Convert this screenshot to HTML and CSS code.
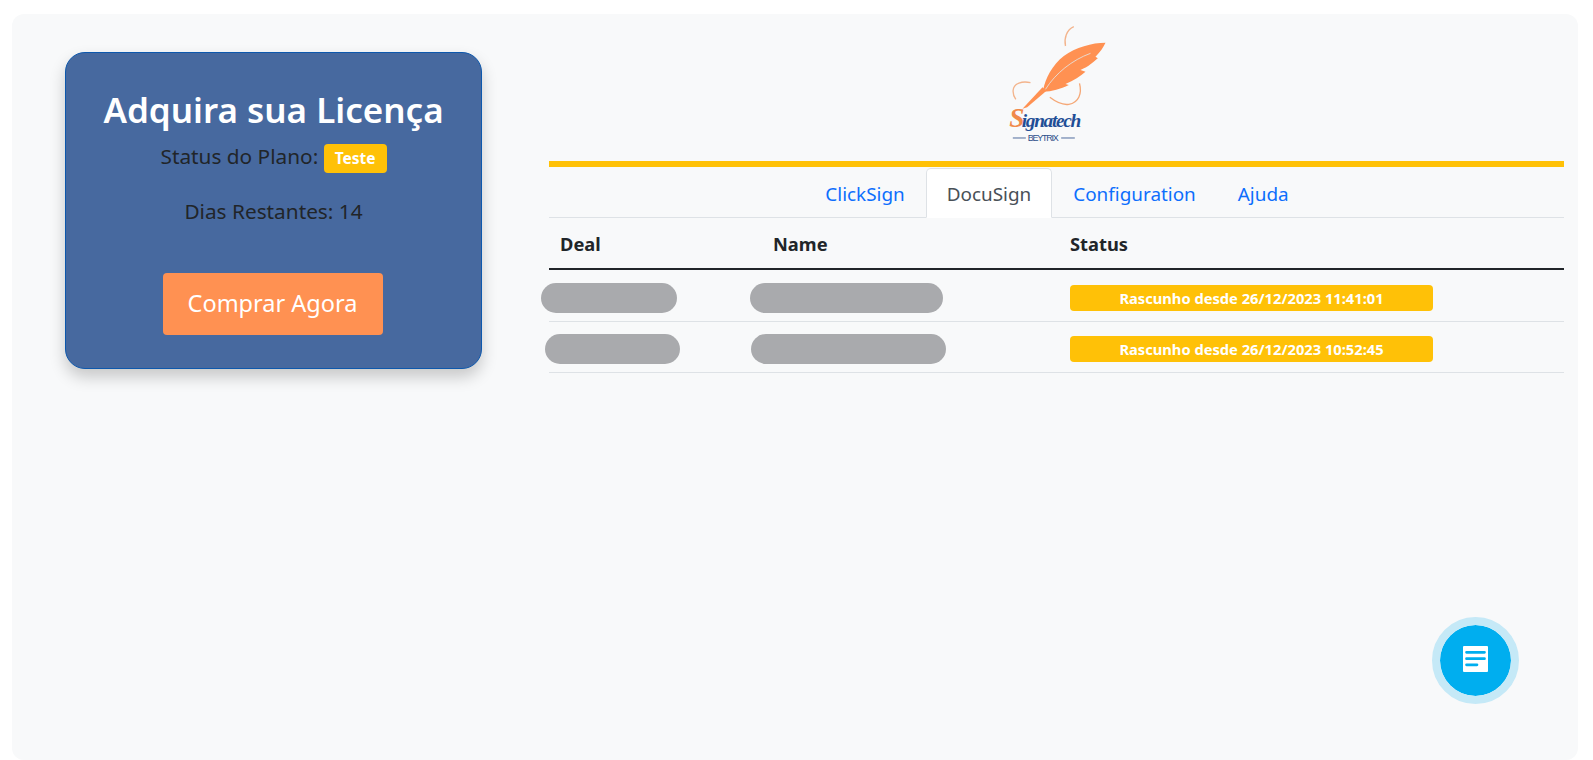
FILE: index.html
```html
<!DOCTYPE html>
<html lang="en">
<head>
  <meta charset="UTF-8" />
  <title>Signatech</title>
  <link rel="stylesheet" href="styles.css">
</head>
<body>
  <div class="panel">
    <div class="license-card">
      <h2>Adquira sua Licença</h2>
      <p class="plan-status">Status do Plano: <span class="plan-badge">Teste</span></p>
      <p class="days-left">Dias Restantes: 14</p>
      <a class="buy-btn" href="#">Comprar Agora</a>
    </div>

    <div class="content">
      <div class="logo">
        <svg width="140" height="140" viewBox="6.5 0 140 140">
          <g transform="scale(0.3333)">
            <path d="M255 108C250 85 258 60 280 50" fill="none" stroke="#f3b48c" stroke-width="4"/>
            <path d="M150 218C125 212 100 220 98 240C97 250 100 260 106 268" fill="none" stroke="#f3b48c" stroke-width="4"/>
            <path d="M297 220C305 250 295 278 265 283C245 286 225 275 208 262" fill="none" stroke="#f5a877" stroke-width="4"/>
            <path d="M188 240C195 205 215 165 250 138C285 112 335 98 375 98C368 112 360 125 345 140L352 145C340 155 325 170 300 180L315 185C300 198 280 212 255 222L265 225C240 237 215 245 188 245Z" fill="#ff9152"/>
            <path d="M126 296L186 232L198 242L140 292Z" fill="#ff9152"/>
            <path d="M195 238C225 190 275 150 330 130" fill="none" stroke="#e9d8cc" stroke-width="3"/>
            <text class="logo-s" x="86" y="352">S</text>
            <text class="logo-name" x="124" y="350" textLength="178">ignatech</text>
            <path d="M97 384H136M242 384H283" stroke="#2c4f8a" stroke-width="2.5"/>
            <text class="logo-sub" x="142" y="392" textLength="93">BEYTRIX</text>
          </g>
        </svg>
      </div>

      <div class="yellow-bar"></div>

      <ul class="tabs">
        <li class="tab">ClickSign</li>
        <li class="tab tab-active">DocuSign</li>
        <li class="tab">Configuration</li>
        <li class="tab">Ajuda</li>
      </ul>

      <table class="deals">
        <thead>
          <tr>
            <th class="col-deal">Deal</th>
            <th class="col-name">Name</th>
            <th>Status</th>
          </tr>
        </thead>
        <tbody>
          <tr>
            <td><div class="hidden-val deal-a"></div></td>
            <td><div class="hidden-val name-a"></div></td>
            <td><div class="status-badge">Rascunho desde 26/12/2023 11:41:01</div></td>
          </tr>
          <tr>
            <td><div class="hidden-val deal-b"></div></td>
            <td><div class="hidden-val name-b"></div></td>
            <td><div class="status-badge">Rascunho desde 26/12/2023 10:52:45</div></td>
          </tr>
        </tbody>
      </table>
    </div>

    <a class="chat-btn" href="#">
      <svg class="chat-icon" width="25" height="26" viewBox="0 0 25 26">
        <rect width="25" height="26" rx="1" fill="#fff"/>
        <path d="M3.500 6.300H21.500M3.500 12.700H21.500M3.500 18.800H14" stroke="#00aeef" stroke-width="2.700" stroke-linecap="round"/>
      </svg>
    </a>
  </div>
</body>
</html>
```

FILE: styles.css
```css
* {
  box-sizing: border-box;
}

body {
  margin: 0;
  background: #fff;
  font-family: "Noto Sans", Arial, sans-serif;
  color: #212529;
}

.panel {
  position: relative;
  display: flex;
  align-items: flex-start;
  margin: 14px 15px 0 12px;
  height: 746px;
  background: #f8f9fa;
  border-radius: 12px;
}

.license-card {
  width: 417px;
  height: 317px;
  margin: 38px 0 0 53px;
  padding: 33px 0 0;
  text-align: center;
  background: #47699f;
  border: 1px solid #0d58ad;
  border-radius: 20px;
  box-shadow: 0 8px 16px rgba(0, 0, 0, 0.2);
}

.license-card h2 {
  margin: 0 0 7px;
  font-size: 35px;
  line-height: 48px;
  font-weight: 600;
  color: #fff;
}

.plan-status {
  margin: 0 0 23px;
  font-size: 20.800px;
  line-height: 30px;
}

.plan-badge {
  display: inline-block;
  padding: 0 11px;
  font-size: 15.500px;
  line-height: 29px;
  font-weight: 700;
  color: #fff;
  background: #ffc107;
  border-radius: 4px;
  vertical-align: top;
  margin-top: 3px;
}

.days-left {
  margin: 0 0 47px;
  font-size: 20.800px;
  line-height: 30px;
}

.buy-btn {
  display: inline-block;
  width: 220px;
  height: 62px;
  margin-left: -2px;
  font-size: 23.500px;
  line-height: 60px;
  color: #fff;
  text-decoration: none;
  background: #ff9152;
  border-radius: 4px;
}

.content {
  width: 1015px;
  margin-left: 67px;
}

.logo {
  display: flex;
  justify-content: center;
  height: 147px;
}

.logo svg {
  margin-top: -4px;
}

.yellow-bar {
  height: 6px;
  background: #ffc107;
}

.tabs {
  display: flex;
  justify-content: center;
  height: 50px;
  margin: 1px 0 0;
  padding: 0 0 0 1px;
  list-style: none;
  border-bottom: 1px solid #dee2e6;
}

.tab {
  padding: 0 20px;
  height: 50px;
  font-size: 18.900px;
  line-height: 50px;
  color: #0d6efd;
  border: 1px solid transparent;
  border-radius: 5px 5px 0 0;
}

.tab-active {
  color: #495057;
  background: #fff;
  border-color: #dee2e6 #dee2e6 #fff;
}

.deals {
  width: 100%;
  border-collapse: collapse;
  table-layout: fixed;
}

.deals th {
  height: 51px;
  padding: 0 11px;
  font-size: 18.300px;
  font-weight: 700;
  text-align: left;
  border-bottom: 2px solid #212529;
}

.col-deal {
  width: 213px;
}

.col-name {
  width: 297px;
}

.deals td {
  height: 51px;
  padding: 12px 11px 0;
  vertical-align: top;
  border-bottom: 1px solid #dee2e6;
}

.deals tbody tr:first-child td {
  height: 52px;
  padding-top: 13px;
}

.hidden-val {
  height: 30px;
  background: #a9aaad;
  border-radius: 15px;
}

.deal-a {
  width: 136px;
  margin-left: -19px;
}

.deal-b {
  width: 135px;
  margin-left: -15px;
}

.name-a {
  width: 193px;
  margin-left: -23px;
}

.name-b {
  width: 195px;
  margin-left: -22px;
}

.status-badge {
  width: 363px;
  height: 26px;
  margin-top: 2px;
  font-size: 14.700px;
  line-height: 26px;
  font-weight: 700;
  text-align: center;
  color: #fff;
  background: #ffc107;
  border-radius: 4px;
}

.logo-s {
  font-family: "Liberation Serif", serif;
  font-style: italic;
  font-weight: 700;
  font-size: 82px;
  fill: #f08a4b;
}

.logo-name {
  font-family: "Liberation Serif", serif;
  font-style: italic;
  font-weight: 700;
  font-size: 58px;
  fill: #1f4e96;
}

.logo-sub {
  font-family: "Liberation Sans", sans-serif;
  font-size: 27px;
  fill: #2c4f8a;
}

.chat-btn {
  position: absolute;
  left: 1420px;
  top: 603px;
  display: flex;
  align-items: center;
  justify-content: center;
  width: 87px;
  height: 87px;
  background: #00aeef;
  border: 8px solid #c5e9f7;
  border-radius: 50%;
  background-clip: padding-box;
}

.chat-icon {
  margin-bottom: 4px;
}
```
